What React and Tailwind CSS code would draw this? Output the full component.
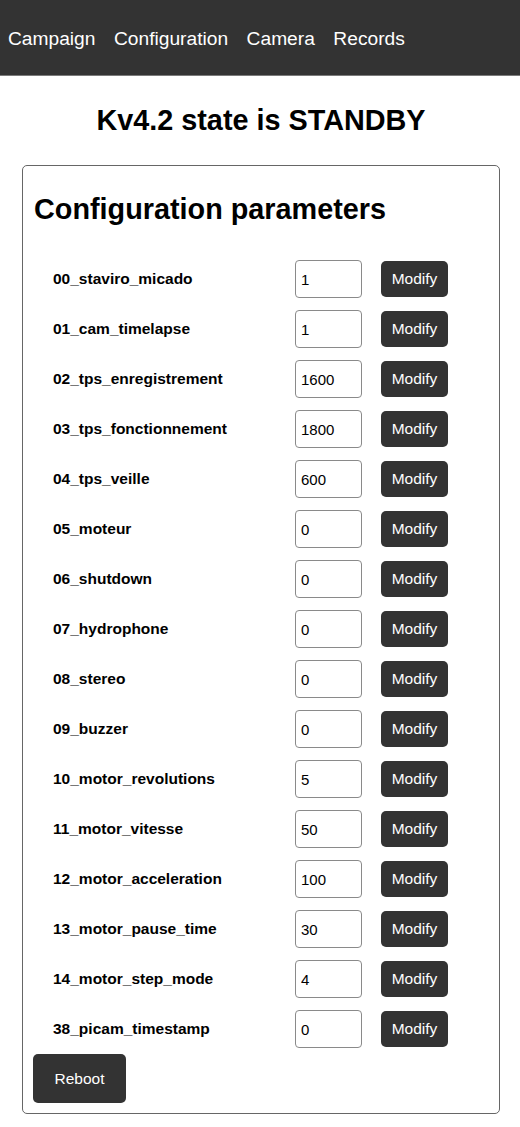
import React from "react";

const params = [
  ["00_staviro_micado", "1"],
  ["01_cam_timelapse", "1"],
  ["02_tps_enregistrement", "1600"],
  ["03_tps_fonctionnement", "1800"],
  ["04_tps_veille", "600"],
  ["05_moteur", "0"],
  ["06_shutdown", "0"],
  ["07_hydrophone", "0"],
  ["08_stereo", "0"],
  ["09_buzzer", "0"],
  ["10_motor_revolutions", "5"],
  ["11_motor_vitesse", "50"],
  ["12_motor_acceleration", "100"],
  ["13_motor_pause_time", "30"],
  ["14_motor_step_mode", "4"],
  ["38_picam_timestamp", "0"],
];

const links = ["Campaign", "Configuration", "Camera", "Records"];

const App = () => {
  return (
    <div className="min-h-screen bg-white text-black font-['Liberation_Sans',Arial,sans-serif]">
      {/* NAV */}
      <nav className="h-[76px] bg-[#333333] border-b border-[#7a7a7a] flex items-center gap-[18.5px] pl-2 pt-[3px]">
        {links.map((l) => (
          <a key={l} className="text-white text-[19.2px] leading-none">
            {l}
          </a>
        ))}
      </nav>

      <h1 className="text-center font-bold text-[28.8px] leading-[33px] mt-[28px] mb-[28px] pl-[2px]">
        Kv4.2 state is STANDBY
      </h1>

      {/* CARD */}
      <div className="w-[478px] ml-[22px] border border-[#666666] rounded-[5px] p-[10px]">
        <h2 className="font-bold text-[28.8px] leading-[33px] mt-[17px] mb-[28px] pl-[1px]">
          Configuration parameters
        </h2>

        {params.map(([name, value]) => (
          <div key={name} className="flex items-center h-[50px] pl-5">
            <label className="w-[242px] font-bold text-[15.5px]">{name}</label>
            <input
              defaultValue={value}
              className="w-[67px] h-[38px] border border-[#8a8a8a] rounded-[4px] px-[5px] text-[15px] outline-none"
            />
            <button className="ml-[19px] w-[67px] h-[36px] bg-[#333333] text-white rounded-[5px] text-[15.5px]">
              Modify
            </button>
          </div>
        ))}

        <button className="w-[93px] h-[49px] bg-[#333333] text-white rounded-[5px] text-[15.5px]">
          Reboot
        </button>
      </div>
    </div>
  );
};

export default App;
